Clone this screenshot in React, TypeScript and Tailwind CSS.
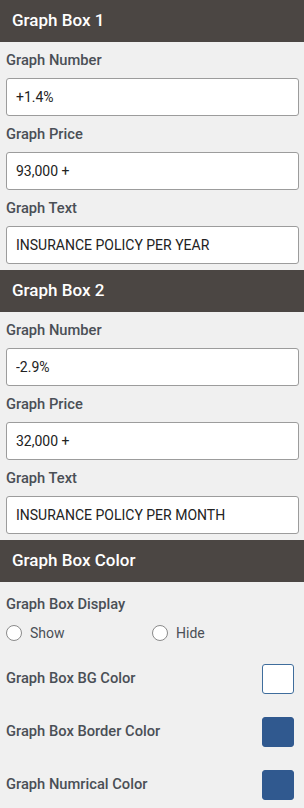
import { useState } from "react";

type Field = { label: string; value: string };

const box1: Field[] = [
    { label: "Graph Number", value: "+1.4%" },
    { label: "Graph Price", value: "93,000 +" },
    { label: "Graph Text", value: "INSURANCE POLICY PER YEAR" },
];

const box2: Field[] = [
    { label: "Graph Number", value: "-2.9%" },
    { label: "Graph Price", value: "32,000 +" },
    { label: "Graph Text", value: "INSURANCE POLICY PER MONTH" },
];

const colors = [
    { label: "Graph Box BG Color", color: "bg-white", border: "border-[#3f6d9c]" },
    { label: "Graph Box Border Color", color: "bg-[#30598f]", border: "border-[#30598f]" },
    { label: "Graph Numrical Color", color: "bg-[#30598f]", border: "border-[#30598f]" },
];

function Header({ title }: { title: string }) {
    return (
        <div className="h-[42px] bg-[#4b4643] flex items-center pl-3">
            <h2 className="text-white text-[17px] font-medium">{title}</h2>
        </div>
    );
}

function FieldGroup({ fields }: { fields: Field[] }) {
    return (
        <div className="px-1.5 pr-[5px] pb-[6px]">
            {fields.map((f) => (
                <div key={f.label}>
                    <label className="h-[36px] flex items-center text-[14.7px] font-medium text-[#4a4f56]">
                        {f.label}
                    </label>
                    <input
                        defaultValue={f.value}
                        className="w-full h-[38px] bg-white border border-[#9c9c9c] rounded-[3px] px-[9px] text-[14px] text-[#222] outline-none"
                    />
                </div>
            ))}
        </div>
    );
}

export default function App() {
    const [display, setDisplay] = useState("");

    return (
        <div className="w-[304px] min-h-[808px] bg-[#f0f0f0] font-['Roboto',sans-serif]">
            <Header title="Graph Box 1" />
            <FieldGroup fields={box1} />
            <Header title="Graph Box 2" />
            <FieldGroup fields={box2} />
            <Header title="Graph Box Color" />

            <div className="px-1.5">
                <div className="h-[38px] pt-[6px] flex items-center text-[14.7px] font-medium text-[#4a4f56]">
                    Graph Box Display
                </div>
                <div className="grid grid-cols-2 h-[26px] items-center text-[14px] text-[#4a4f56]">
                    {["Show", "Hide"].map((opt) => (
                        <label key={opt} className="flex items-center gap-[8px] cursor-pointer">
                            <span
                                onClick={() => setDisplay(opt)}
                                className="w-[16px] h-[16px] rounded-full border border-[#8a8a8a] bg-white flex items-center justify-center"
                            >
                                {display === opt && <span className="w-[8px] h-[8px] rounded-full bg-[#30598f]" />}
                            </span>
                            {opt}
                        </label>
                    ))}
                </div>

                <div className="pt-[6px]">
                    {colors.map((c) => (
                        <div key={c.label} className="h-[53px] flex items-center justify-between pr-[4px]">
                            <span className="text-[14.7px] font-medium text-[#4a4f56]">{c.label}</span>
                            <span className={`w-[32px] h-[30px] rounded-[3px] border ${c.color} ${c.border}`} />
                        </div>
                    ))}
                </div>
            </div>
        </div>
    );
}
